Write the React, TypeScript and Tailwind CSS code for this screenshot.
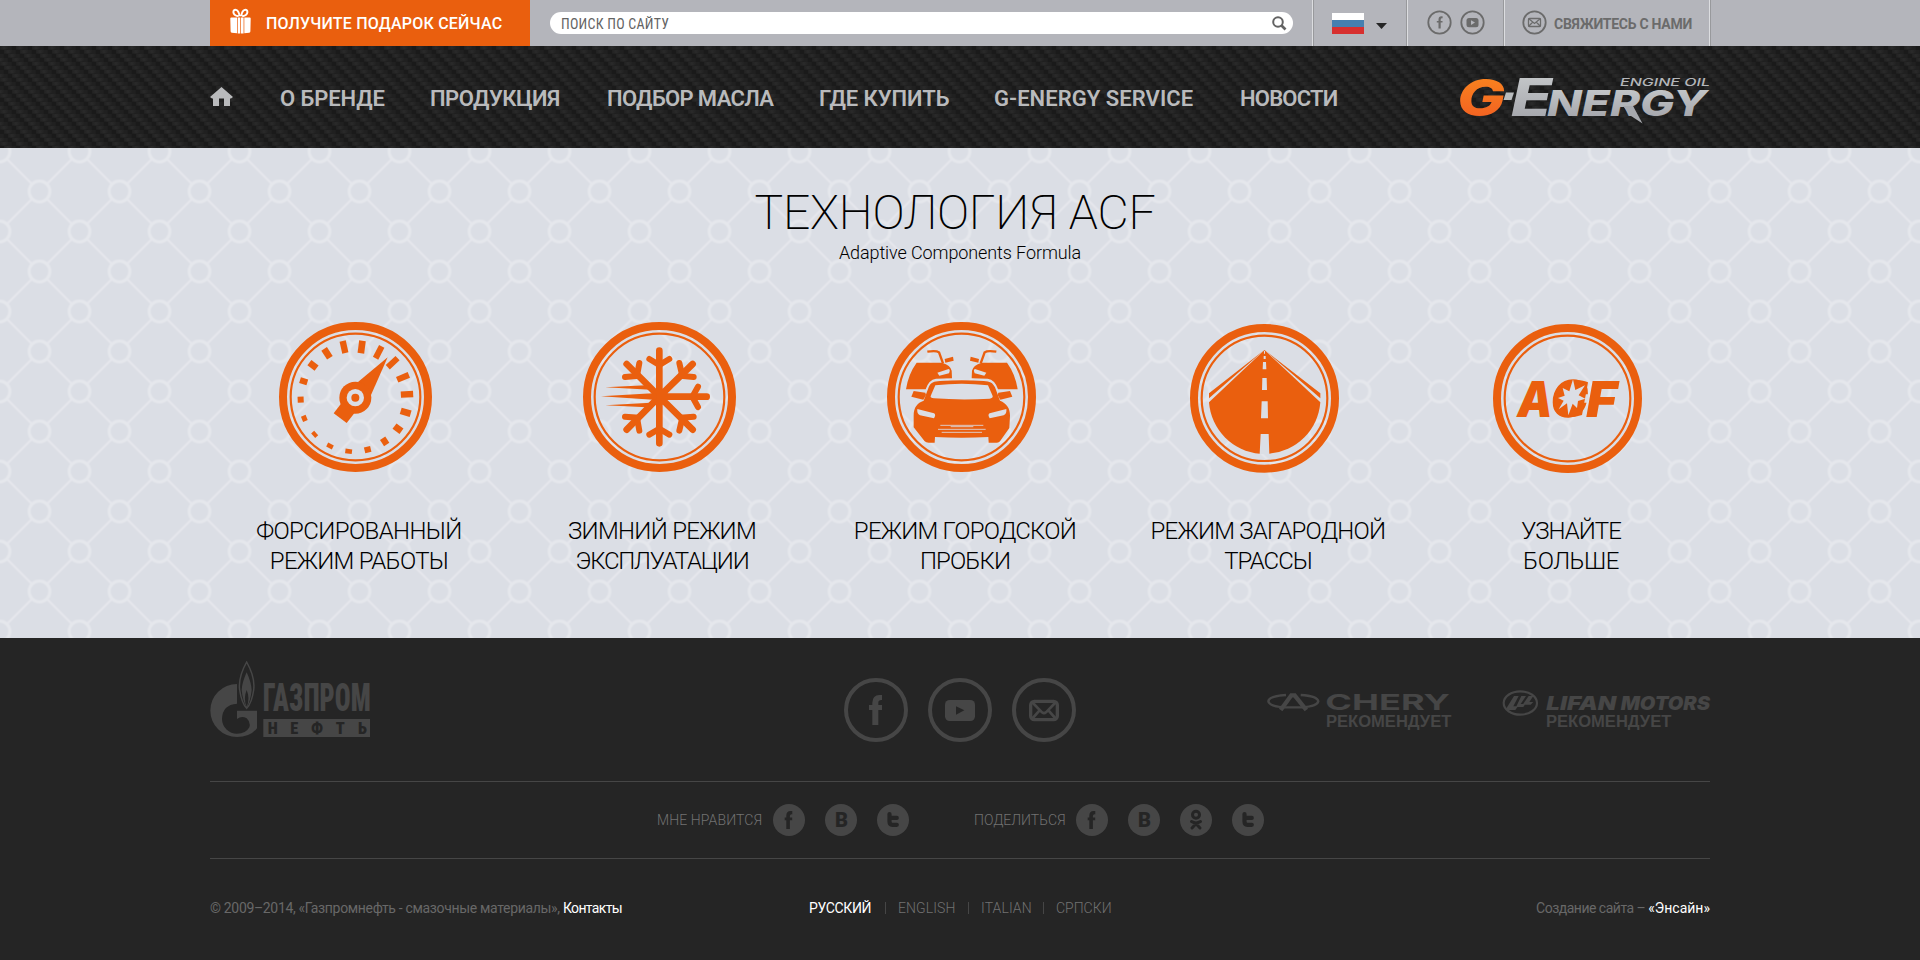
import type { ReactNode } from "react";

const ORANGE = "#ea5f0e";
const PALE = "#dbdee5";
const DIM = "#464646";
const DARK = "#252525";

function Carbon() {
  return (
    <svg className="absolute inset-0 h-full w-full" aria-hidden="true">
      <defs>
        <linearGradient id="fiberH" x1="0" y1="0" x2="1" y2="0">
          <stop offset="0" stopColor="#212121" />
          <stop offset="0.5" stopColor="#2a2a2a" />
          <stop offset="1" stopColor="#212121" />
        </linearGradient>
        <pattern id="carbon" width="16" height="16" patternUnits="userSpaceOnUse">
          <rect width="16" height="16" fill="#1a1a1a" />
          {[0, 1, 2, 3].map((k) => (
            <g key={k}>
              <rect x={k * 4} y={k * 4} width="8" height="3.6" fill="url(#fiberH)" />
              <rect x={k * 4 - 16} y={k * 4} width="8" height="3.6" fill="url(#fiberH)" />
              <rect x={k * 4 + 8} y={k * 4} width="3.6" height="4" fill="#202020" />
              <rect x={k * 4 - 8} y={k * 4} width="3.6" height="4" fill="#202020" />
            </g>
          ))}
        </pattern>
      </defs>
      <rect width="100%" height="100%" fill="url(#carbon)" />
    </svg>
  );
}

function Lattice() {
  return (
    <svg className="absolute inset-0 h-full w-full" aria-hidden="true">
      <defs>
        <pattern id="lattice" x="-0.5" y="3.5" width="80" height="80" patternUnits="userSpaceOnUse">
          <path
            d="M8 8L32 32M48 48L72 72M72 8L48 32M32 48L8 72"
            stroke="#e5e7ec"
            strokeWidth="2.2"
          />
          <g fill="none" stroke="#e5e7ec" strokeWidth="3">
            <circle cx="40" cy="40" r="10.4" />
            <circle cx="0" cy="0" r="10.4" />
            <circle cx="80" cy="0" r="10.4" />
            <circle cx="0" cy="80" r="10.4" />
            <circle cx="80" cy="80" r="10.4" />
          </g>
        </pattern>
      </defs>
      <rect width="100%" height="100%" fill="url(#lattice)" />
    </svg>
  );
}

function GiftIcon() {
  return (
    <svg width="21" height="26" viewBox="0 0 21 26" fill="white">
      <path d="M0.3 10.500Q0.300 9.500 1.300 9.500H7V25.300L1.800 24.800Q0.600 24.700 .6 23.300zM7.7 9.500H10.300V25.500H7.700zM11 9.500H13.600V25.500H11zM14.300 9.500H19.700Q20.700 9.500 20.700 10.500L20.400 23.300Q20.400 24.700 19.200 24.800L14.300 25.300z" />
      <g fill="none" stroke="white" strokeWidth="2">
        <path d="M9.6 8.2Q8.8 2.8 6 1.9Q3.4 1.4 3.4 4.2Q3.6 7.4 8.6 8.2M11.2 8.2Q12 2.8 14.8 1.9Q17.4 1.4 17.4 4.2Q17.2 7.4 12.2 8.2" />
      </g>
    </svg>
  );
}

function GEnergyLogo() {
  return (
    <svg className="overflow-visible" width="252" height="48" viewBox="0 0 252 48">
      <defs>
        <linearGradient id="gOrange" x1="0" y1="0" x2="0" y2="1">
          <stop offset="0" stopColor="#fa8a1e" />
          <stop offset="1" stopColor="#f15a22" />
        </linearGradient>
        <linearGradient id="gSilver" x1="0" y1="0" x2="0" y2="1">
          <stop offset="0.1" stopColor="#c6c9cb" />
          <stop offset="0.9" stopColor="#a3a4aa" />
        </linearGradient>
      </defs>
      <g fontFamily="Inter, sans-serif" fontWeight="800" fontStyle="italic">
        <text x="-3" y="38" fontSize="51" textLength="48" lengthAdjust="spacingAndGlyphs" fill="url(#gOrange)">G</text>
        <path d="M46 14.5L54 14.5L51.5 22H43.5Z" fill="#b9bcbe" />
        <text x="51" y="38" fontSize="52" textLength="41" lengthAdjust="spacingAndGlyphs" fill="url(#gSilver)">E</text>
        <text x="87" y="38" fontSize="35" textLength="160" lengthAdjust="spacingAndGlyphs" fill="url(#gSilver)">NERGY</text>
      </g>
      <path d="M163 28L173 28L182.500 45.500L171 38Z" fill="#a6a8ad" />
      <text x="160" y="7.500" fontFamily="Inter, sans-serif" fontWeight="500" fontStyle="italic" fontSize="10" textLength="90" lengthAdjust="spacingAndGlyphs" fill="#b4b6b9">
        ENGINE OIL
      </text>
    </svg>
  );
}

function Rings({ cx, cy, rx, ry }: { cx: number; cy: number; rx: number; ry: number }) {
  return (
    <g fill="none" stroke={ORANGE}>
      <ellipse cx={cx} cy={cy} rx={rx - 12} ry={ry - 12} strokeWidth="24" />
      <ellipse cx={cx} cy={cy} rx={rx - 35} ry={ry - 35} strokeWidth="6.500" />
    </g>
  );
}

const TICKS: [number, number, number, number][] = [
  [305, 141, 38, 20], [356, 157, 40, 18], [398, 188, 40, 18], [429, 232, 38, 18],
  [441, 283, 37, 19], [437, 337, 31, 20], [414, 386, 26, 20], [374, 424, 22, 19],
  [323, 449, 18, 19], [266, 454, 14, 20], [210, 438, 13, 19], [164, 403, 12, 18],
  [133, 355, 15, 17], [122, 299, 18, 18], [131, 244, 23, 18], [159, 196, 27, 20],
  [201, 160, 32, 20], [252, 141, 37, 19],
];

function GaugeIcon() {
  return (
    <svg width="153" height="150" viewBox="57 66 459 450">
      <Rings cx={286.5} cy={291} rx={229.5} ry={225} />
      <g fill={ORANGE}>
        {TICKS.map(([x, y, len, w]) => (
          <rect
            key={`${x}-${y}`}
            x={x - len / 2}
            y={y - w / 2}
            width={len}
            height={w}
            transform={`rotate(${(Math.atan2(y - 292, x - 286) * 180) / Math.PI} ${x} ${y})`}
          />
        ))}
        <path d="M383 172L294 246L333 285Z" />
        <circle cx="286" cy="293" r="48" />
        <path d="M247 306L221 340L260 369L284 338Z" />
      </g>
      <circle cx="286" cy="293" r="26" fill={PALE} />
      <circle cx="286" cy="293" r="12" fill={ORANGE} />
    </svg>
  );
}

function SnowIcon() {
  return (
    <svg width="153" height="150" viewBox="969 66 459 450">
      <Rings cx={1198.5} cy={291} rx={229.5} ry={225} />
      <g fill="none" stroke={ORANGE} strokeLinecap="round">
        <path
          strokeWidth="20"
          d="M1198 152V430M1198 290H1340M1198 290L1298 192M1198 290L1100 192M1198 290L1298 389M1198 290L1100 389"
        />
        <path
          strokeWidth="18"
          d="M1168 177L1198 195L1228 177M1168 404L1198 386L1228 404M1314 260L1297 290L1314 321M1258 189L1267 228L1301 231M1138 189L1131 228L1095 231M1258 392L1267 353L1301 350M1138 392L1131 353L1095 350"
        />
      </g>
      <path
        fill={ORANGE}
        d="M1036 262L1172 255L1186 270ZM1023 289L1190 279V300ZM1036 316L1172 308L1160 322Z"
      />
    </svg>
  );
}

function CarHalf() {
  return (
    <>
      <path
        fill={ORANGE}
        d="M170 188H246Q272 196 275 212L276 235L228 236Q206 239 197 268H138Q145 222 170 188ZM254 177L279 170L281 182L256 188Z"
      />
      <path fill="none" stroke={ORANGE} strokeWidth="7" d="M202 155Q229 151 237 157L249 190" />
      <path fill={PALE} d="M232 218L266 207Q272 208 267 220L238 227Z" />
      <path fill={ORANGE} d="M161 273L196 278L198 285L190 299L154 290Z" />
    </>
  );
}

function TrafficIcon() {
  return (
    <svg width="149" height="150" viewBox="81 66 447 450">
      <Rings cx={304.5} cy={291} rx={223.5} ry={225} />
      <CarHalf />
      <g transform="translate(611 0) scale(-1 1)">
        <CarHalf />
      </g>
      <path
        fill={ORANGE}
        d="M161 347C161 322 172 308 191 302L206 262C212 247 222 244 240 243Q305 238 371 243C390 244 398 248 405 262L420 302C440 310 450 324 450 347L448 384L420 424Q417 428 411 428H386L385 411Q305 415 225 411L224 428H206Q198 428 194 424L161 382Z"
      />
      <path fill={PALE} d="M212 288L226 256Q305 247 384 256L398 288Q399 295 389 296Q305 301 222 295Q210 294 212 288Z" />
      <path fill={PALE} d="M172 327L222 340Q229 344 222 355L180 346Q170 341 172 327ZM439 327L389 340Q382 344 389 355L431 346Q441 341 439 327Z" />
      <path stroke={PALE} strokeWidth="2.500" d="M241 376H370M234 388H377M245 397H366M272 380H340" />
    </svg>
  );
}

function RoadIcon() {
  return (
    <svg width="149" height="149" viewBox="990 72 447 447">
      <Rings cx={1213.5} cy={295} rx={223.5} ry={223} />
      <path fill={ORANGE} d="M1213.500 150L1381 307A167 167 0 0 1 1227 461H1200A167 167 0 0 1 1047 307Z" />
      <path fill={ORANGE} d="M1213 150L1047 280V295ZM1214 150L1381 280V295Z" />
      <path
        fill={PALE}
        d="M1212 153h3v8h-3zM1211 168h6v9h-6zM1209 186h9l1 22h-11zM1207 234h13l1 36h-15zM1205 304h18l1 51h-21zM1202 402h24l2 60h-29z"
      />
    </svg>
  );
}

function AcfIcon() {
  return (
    <svg width="149" height="149" viewBox="459 72 447 447">
      <Rings cx={682.5} cy={295.5} rx={223.5} ry={223.5} />
      <g fill={ORANGE} fontFamily="Inter, sans-serif" fontWeight="900" fontStyle="italic" fontSize="149">
        <text x="532" y="350" textLength="106" lengthAdjust="spacingAndGlyphs">A</text>
        <text x="634" y="349" fontSize="146" stroke={ORANGE} strokeWidth="4" textLength="108" lengthAdjust="spacingAndGlyphs">C</text>
        <text x="739" y="350" textLength="92" lengthAdjust="spacingAndGlyphs">F</text>
      </g>
      <path
        fill={ORANGE}
        d="M700 240Q728 240 744 247L726 345Q706 352 684 352Z"
      />
      <ellipse cx="692" cy="295" rx="34" ry="38" fill={ORANGE} />
      <path
        fill={PALE}
        d="M699 238L706 270L735 256L716 286L736 296L714 303L711 324L698 311L685 346L681 310L656 328L671 302L654 294L674 287L668 264L688 274Z"
      />
    </svg>
  );
}

const FEATURES: { icon: ReactNode; iconClass: string; lines: [string, string][] }[] = [
  {
    icon: <GaugeIcon />,
    iconClass: "h-[151px] pl-[72px]",
    lines: [["ФОРСИРОВАННЫЙ", "tracking-[-0.6px]"], ["РЕЖИМ РАБОТЫ", "tracking-[-0.7px]"]],
  },
  {
    icon: <SnowIcon />,
    iconClass: "h-[151px] pl-[73px]",
    lines: [["ЗИМНИЙ РЕЖИМ", "tracking-[-0.7px]"], ["ЭКСПЛУАТАЦИИ", "tracking-[-1.2px]"]],
  },
  {
    icon: <TrafficIcon />,
    iconClass: "h-[151px] pl-[74px]",
    lines: [["РЕЖИМ ГОРОДСКОЙ", "tracking-[-0.75px]"], ["ПРОБКИ", "tracking-[-0.9px]"]],
  },
  {
    icon: <RoadIcon />,
    iconClass: "h-[151px] pl-[74px] pt-[2px]",
    lines: [["РЕЖИМ ЗАГАРОДНОЙ", "tracking-[-0.75px]"], ["ТРАССЫ", "tracking-[-1px]"]],
  },
  {
    icon: <AcfIcon />,
    iconClass: "h-[151px] pl-[74px] pt-[2px]",
    lines: [["УЗНАЙТЕ", "tracking-[-1px]"], ["БОЛЬШЕ", "tracking-[-0.4px]"]],
  },
];

const NAV: [string, string][] = [
  ["О БРЕНДЕ", "tracking-[-0.1px]"],
  ["ПРОДУКЦИЯ", "tracking-[-0.5px]"],
  ["ПОДБОР МАСЛА", "tracking-[-0.65px]"],
  ["ГДЕ КУПИТЬ", "tracking-[-0.05px]"],
  ["G-ENERGY SERVICE", "tracking-[0.05px]"],
  ["НОВОСТИ", "tracking-[-0.8px]"],
];

const F_PATH = "M186 165V180Q175 179 175 188V195H186V210H175V255H157V210H147V195H157V188Q158 165 178 165Z";

function SmallRing({ children }: { children: ReactNode }) {
  return (
    <svg width="25" height="25" viewBox="0 0 25 25">
      <circle cx="12.500" cy="12.500" r="11.200" fill="none" stroke="#6b6b6b" strokeWidth="1.800" />
      {children}
    </svg>
  );
}

function BigRing({ children }: { children: ReactNode }) {
  return (
    <svg width="64" height="64" viewBox="0 0 192 192">
      <circle cx="96" cy="96" r="90" fill="none" stroke={DIM} strokeWidth="12" />
      {children}
    </svg>
  );
}

function GazpromLogo() {
  return (
    <svg width="160" height="76" viewBox="30 63 480 228">
      <path
        fill={DIM}
        d="M111 132A80 79.500 0 0 0 111 291Q150 291 171 265V212H111V237Q125 226 140 235Q153 247 148 262Q138 281 111 281A45 45 0 0 1 66 237Q67 194 111 191Z"
      />
      <path fill="none" stroke={DIM} strokeWidth="4.500" d="M140 66Q166 112 161 150Q155 190 140 205Q125 190 119 150Q114 112 140 66Z" />
      <path
        fill={DIM}
        fillRule="evenodd"
        d="M140 97Q154 128 155 150Q152 182 140 203Q128 182 125 150Q126 128 140 97ZM140 150Q129 176 140 200Q151 176 140 150Z"
      />
      <g className="[font-stretch:75%]" fontFamily="Roboto, sans-serif">
        <text x="188" y="213" fontSize="114" fontWeight="900" textLength="324" lengthAdjust="spacingAndGlyphs" fill={DIM}>
          ГАЗПРОМ
        </text>
        <rect x="190" y="237" width="320" height="54" fill={DIM} />
        <text x="203 271 333 407 474" y="282" fontSize="49" fontWeight="900" fill={DARK}>
          НЕФТЬ
        </text>
      </g>
    </svg>
  );
}

function CheryLogo() {
  return (
    <svg className="shrink-0" width="185" height="42" viewBox="81 84 555 126">
      <g fill="none" stroke={DIM}>
        <path strokeWidth="7" d="M138 105Q86 108 85 124Q88 139 134 142H188Q232 139 235 124Q232 108 182 105" />
        <path strokeWidth="13" d="M122 150L154 106H164L199 150" />
      </g>
      <text x="256" y="150" fontFamily="Inter, sans-serif" fontWeight="700" fontSize="66" textLength="374" lengthAdjust="spacingAndGlyphs" fill={DIM}>
        CHERY
      </text>
      <text x="258" y="202" fontFamily="Liberation Sans, sans-serif" fontWeight="700" fontSize="48" textLength="376" lengthAdjust="spacingAndGlyphs" fill={DIM}>
        РЕКОМЕНДУЕТ
      </text>
    </svg>
  );
}

function LifanLogo() {
  return (
    <svg className="shrink-0 overflow-visible" width="210" height="42" viewBox="786 84 630 126">
      <ellipse cx="841" cy="129" rx="50" ry="35" fill="none" stroke={DIM} strokeWidth="6.500" />
      <path
        fill={DIM}
        d="M822 108H836L820 139H834L826 150H796ZM844 108H858L842 132H856L850 141H828ZM866 108H880L868 126H880L872 134H848Z"
      />
      <g fontFamily="Inter, sans-serif" fontWeight="900" fontStyle="italic" fontSize="58" fill={DIM}>
        <text x="919" y="150" textLength="210" lengthAdjust="spacingAndGlyphs">LIFAN</text>
        <text x="1142" y="150" textLength="268" lengthAdjust="spacingAndGlyphs">MOTORS</text>
      </g>
      <text x="918" y="202" fontFamily="Liberation Sans, sans-serif" fontWeight="700" fontSize="48" textLength="376" lengthAdjust="spacingAndGlyphs" fill={DIM}>
        РЕКОМЕНДУЕТ
      </text>
    </svg>
  );
}

type Network = "fb" | "vk" | "ok" | "tw";

function Share({ kind }: { kind: Network }) {
  return (
    <svg width="32" height="32" viewBox="0 0 32 32">
      <circle cx="16" cy="16" r="16" fill={DIM} />
      {kind === "fb" && (
        <path fill={DARK} d="M19.300 7V10.200Q16.900 9.900 16.900 11.800V13.500H19.200V16.300H16.900V25H13.300V16.300H11.700V13.500H13.300V11.500Q13.400 7 17.500 7Z" />
      )}
      {kind === "vk" && (
        <text x="10" y="23" fontFamily="Roboto, sans-serif" fontWeight="900" fontSize="21" textLength="13" lengthAdjust="spacingAndGlyphs" fill={DARK}>B</text>
      )}
      {kind === "tw" && (
        <path fill="none" stroke={DARK} strokeWidth="4.200" strokeLinecap="round" d="M12.500 10V17.500Q12.500 20.800 15.500 20.800H19.800M12.500 13.900H19.800" />
      )}
      {kind === "ok" && (
        <g fill="none" stroke={DARK} strokeWidth="3" strokeLinecap="round">
          <circle cx="16" cy="10.800" r="3.500" />
          <path d="M11.500 17.600Q16 20.400 20.500 17.600M16 19.800L12 24M16 19.800L20 24" />
        </g>
      )}
    </svg>
  );
}

function TopBar() {
  return (
    <div className="h-[46px] bg-[#b4b5bb]">
      <div className="mx-auto flex h-full w-[1500px]">
        <a className="flex w-[320px] items-start bg-[#ea5f0e] pt-2 pl-5 text-white">
          <GiftIcon />
          <span className="mt-[6px] ml-[15px] text-base leading-5 font-medium tracking-[0.2px] whitespace-nowrap">
            ПОЛУЧИТЕ ПОДАРОК СЕЙЧАС
          </span>
        </a>
        <div className="mt-3 ml-5 flex h-[22px] w-[743px] items-center justify-between rounded-full bg-white pr-[6px] pl-[11px]">
          <span className="pt-px text-sm leading-5 tracking-[0.25px] text-[#636363] [font-stretch:75%]">ПОИСК ПО САЙТУ</span>
          <svg width="15" height="15" viewBox="0 0 15 15" fill="none" stroke="#636363">
            <circle cx="6" cy="6" r="4.800" strokeWidth="2" />
            <path d="M9.500 9.500L13.500 13.500" strokeWidth="2.600" />
          </svg>
        </div>
        <div className="ml-[19px] flex w-[95px] border-l border-[#dcdde0] pl-[19px] shadow-[inset_1px_0_0_#98999c]">
          <svg className="mt-[13px]" width="32" height="21" viewBox="0 0 32 21">
            <rect width="32" height="7" fill="#fff" />
            <rect y="7" width="32" height="7" fill="#4580b0" />
            <rect y="14" width="32" height="7" fill="#d7302f" />
          </svg>
          <svg className="mt-[23px] ml-3" width="11" height="6" viewBox="0 0 11 6">
            <path d="M0 0H11L5.500 6Z" fill="#252525" />
          </svg>
        </div>
        <div className="flex w-[97px] gap-2 border-l border-[#dcdde0] pt-[10px] pl-[19px] shadow-[-1px_0_0_#98999c]">
          <SmallRing>
            <path fill="#6b6b6b" d="M15.600 6.300V8.300Q13.700 8 13.700 9.500V10.900H15.500V12.500H13.700V18.500H11.500V12.500H9.800V10.900H11.500V9.500Q11.600 6.200 14.500 6.200Z" />
          </SmallRing>
          <SmallRing>
            <rect x="6.500" y="8" width="12" height="9.200" rx="2.500" fill="#6b6b6b" />
            <path d="M11 10.200L15 12.600L11 15Z" fill="#b4b5bb" />
          </SmallRing>
        </div>
        <div className="flex w-[206px] border-x border-[#dcdde0] pt-[10px] pl-[17px] shadow-[-1px_0_0_#98999c,1px_0_0_#98999c]">
          <SmallRing>
            <g fill="none" stroke="#6b6b6b" strokeWidth="1.300">
              <rect x="6.500" y="8.500" width="12" height="8" rx="1" />
              <path d="M6.500 8.500L12.500 13.500L18.500 8.500M6.500 16.500L10.800 12M18.500 16.500L14.200 12" />
            </g>
          </SmallRing>
          <span className="mt-[4px] ml-[7px] text-sm leading-5 font-bold tracking-[-0.25px] whitespace-nowrap text-[#6b6b6b]">
            СВЯЖИТЕСЬ С НАМИ
          </span>
        </div>
      </div>
    </div>
  );
}

function MainNav() {
  return (
    <div className="relative h-[102px] bg-[#1b1b1b]">
      <Carbon />
      <div className="relative mx-auto flex h-full w-[1500px] justify-between">
        <nav className="grid grid-cols-[70px_150px_177px_212px_175px_246px_110px] pt-10 text-[22px] leading-[26px] font-semibold whitespace-nowrap text-[#b9babc]">
          <svg className="mt-px" width="23" height="19" viewBox="0 0 23 19" fill="#b9babc">
            <path d="M11.500 0L23 10L21 11.500H20V19H14V11.500H9V19H3V11.500H2L0 10Z" />
          </svg>
          {NAV.map(([label, tracking]) => (
            <a key={label} className={tracking}>{label}</a>
          ))}
        </nav>
        <div className="-mr-[2px] pt-8">
          <GEnergyLogo />
        </div>
      </div>
    </div>
  );
}

function Technology() {
  return (
    <section className="relative h-[490px] bg-[#dbdee5]">
      <Lattice />
      <div className="relative pt-[37px] text-center text-black">
        <h1 className="-ml-[10px] text-[48px] leading-[56px] font-extralight tracking-[-0.2px]">ТЕХНОЛОГИЯ ACF</h1>
        <p className="mt-px text-[18px] leading-[22px] font-[350] tracking-[-0.1px]">Adaptive Components Formula</p>
        <div className="mt-[58px] -ml-[3px] flex pl-[210px] text-left">
          {FEATURES.map((f) => (
            <div key={f.lines[0][0]} className="w-[303px] shrink-0">
              <div className={f.iconClass}>{f.icon}</div>
              <p className="mt-[43px] pl-px text-center text-2xl leading-[30px] font-light">
                {f.lines.map(([text, tracking]) => (
                  <span key={text} className="block">
                    <span className={tracking}>{text}</span>
                  </span>
                ))}
              </p>
            </div>
          ))}
        </div>
      </div>
    </section>
  );
}

function Footer() {
  return (
    <footer className="h-[322px] bg-[#252525] text-sm leading-5 font-light text-[#727272]">
      <div className="mx-auto w-[1500px]">
        <div className="flex h-[144px] border-b border-[#464646]">
          <div className="w-[634px] shrink-0 pt-[23px]">
            <GazpromLogo />
          </div>
          <div className="flex w-[423px] shrink-0 gap-5 pt-10">
            <BigRing>
              <path d={F_PATH} fill={DIM} transform="translate(-72 -114)" />
            </BigRing>
            <BigRing>
              <rect x="51" y="66" width="90" height="63" rx="14" fill={DIM} />
              <path d="M84 85L109 97L84 110Z" fill={DARK} />
            </BigRing>
            <BigRing>
              <g fill="none" stroke={DIM}>
                <rect x="56" y="70" width="80" height="55" rx="11" strokeWidth="10" />
                <path strokeWidth="8" d="M60 72L90 103Q96 108 102 103L132 72M60 123L82 98M132 123L110 98" />
              </g>
            </BigRing>
          </div>
          <div className="flex shrink-0 gap-[50px] pt-[50px]">
            <CheryLogo />
            <LifanLogo />
          </div>
        </div>
        <div className="flex h-[77px] border-b border-[#464646] pt-[22px] pl-[447px]">
          <span className="w-[116px] pt-[6px] tracking-[0.1px]">МНЕ НРАВИТСЯ</span>
          <div className="flex w-[201px] gap-5">
            <Share kind="fb" />
            <Share kind="vk" />
            <Share kind="tw" />
          </div>
          <span className="w-[102px] pt-[6px]">ПОДЕЛИТЬСЯ</span>
          <div className="flex gap-5">
            <Share kind="fb" />
            <Share kind="vk" />
            <Share kind="ok" />
            <Share kind="tw" />
          </div>
        </div>
        <div className="flex pt-[39px] whitespace-nowrap">
          <p className="w-[599px] shrink-0 font-normal tracking-[-0.33px] text-[#686868]">
            © 2009–2014, «Газпромнефть - смазочные материалы»,{" "}
            <a className="tracking-[-0.65px] text-white">Контакты</a>
          </p>
          <div className="flex shrink-0 items-center">
            <a className="w-[76px] font-normal tracking-[-0.35px] text-white">РУССКИЙ</a>
            <i className="mr-[12px] h-3 w-px bg-[#464646]" />
            <a className="w-[70px] tracking-[0.1px]">ENGLISH</a>
            <i className="mr-[12px] h-3 w-px bg-[#464646]" />
            <a className="w-[62px] tracking-[0.1px]">ITALIAN</a>
            <i className="mr-[12px] h-3 w-px bg-[#464646]" />
            <a>СРПСКИ</a>
          </div>
          <p className="ml-auto font-normal tracking-[-0.5px] text-[#686868]">
            Создание сайта – <a className="tracking-[0px] text-white">«Энсайн»</a>
          </p>
        </div>
      </div>
    </footer>
  );
}

export default function App() {
  return (
    <div className="w-[1920px] overflow-hidden font-[Roboto,sans-serif]">
      <TopBar />
      <MainNav />
      <Technology />
      <Footer />
    </div>
  );
}
